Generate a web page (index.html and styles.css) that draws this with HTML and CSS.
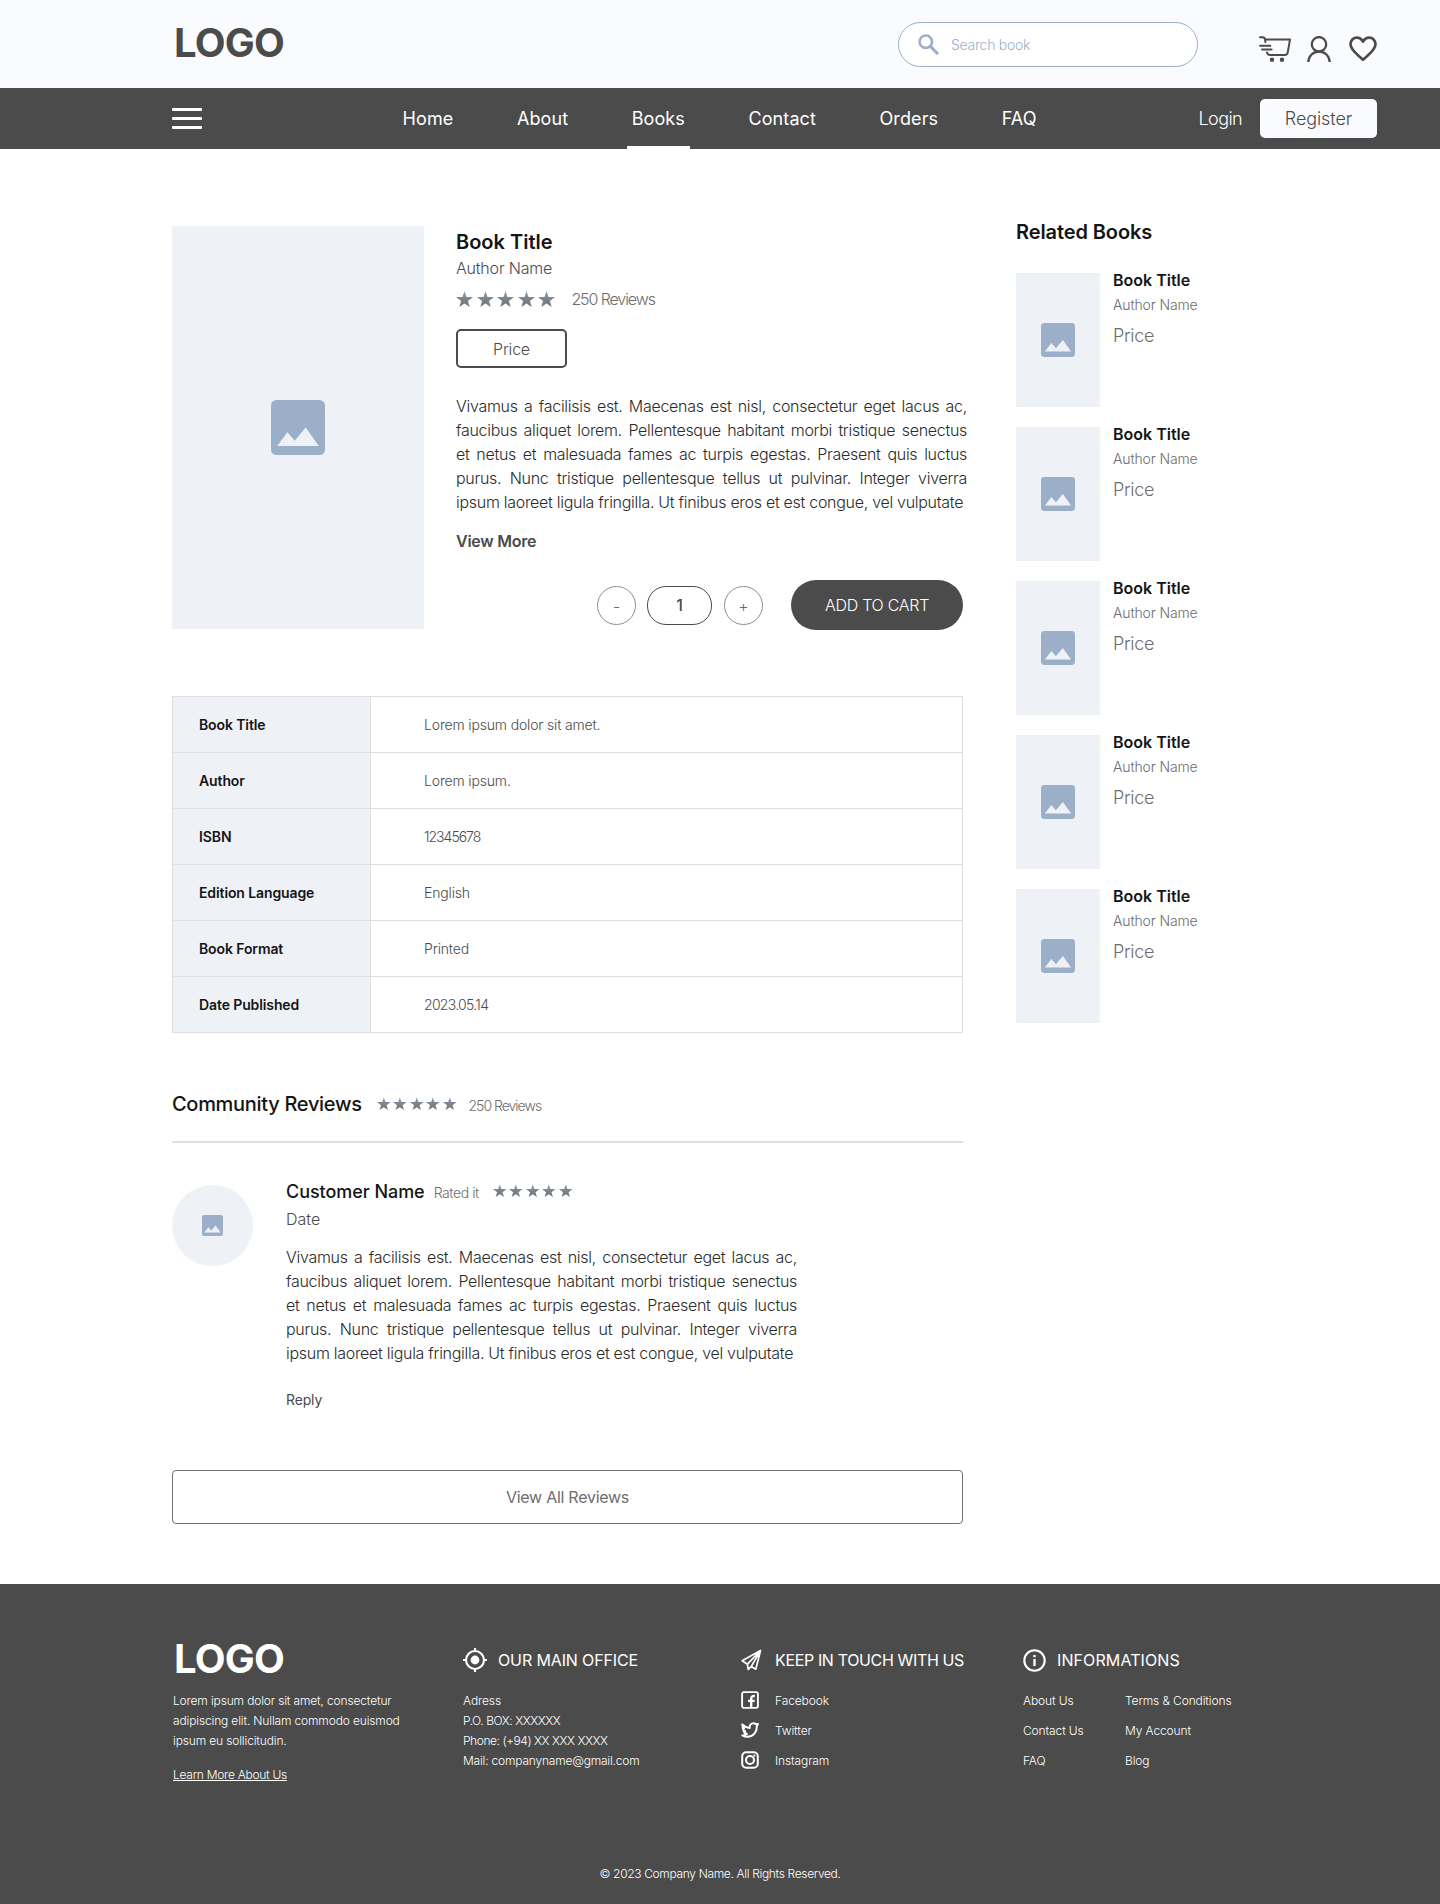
FILE: index.html
```html
<!DOCTYPE html>
<html lang="en">
<head>
<meta charset="utf-8">
<title>Book Title</title>
<link rel="stylesheet" href="styles.css">
</head>
<body>
<svg class="defs" width="0" height="0" aria-hidden="true">
  <defs>
    <linearGradient id="star-fill" x1="0" y1="0" x2="0" y2="1">
      <stop offset="0" stop-color="#91a8c8"/>
      <stop offset="0.5" stop-color="#7b828c"/>
      <stop offset="1" stop-color="#75777a"/>
    </linearGradient>
    <symbol id="star" viewBox="0 0 17 16">
      <path fill="url(#star-fill)" d="M8.5 0l2 5.900 6.500.1-5.100 3.900 1.800 6.100-5.200-3.600L3.300 16l1.800-6.100L0 6l6.500-.1z"/>
    </symbol>
    <symbol id="picture" viewBox="0 0 54 55" preserveAspectRatio="none">
      <rect width="54" height="55" rx="5.5" fill="#9cafc9"/>
      <path fill="#eef2f7" d="M6.2 46l10.2-13.8 7.3 8.6 11-13.2L47.8 46z"/>
    </symbol>
  </defs>
</svg>

<header class="topbar">
  <a class="logo">LOGO</a>
  <label class="search">
    <svg width="21" height="21" viewBox="0 0 21 21" fill="none" stroke="#9cafc9"><circle cx="7.8" cy="7.7" r="6.2" stroke-width="2.6"/><path d="M12.4 12.4l7.6 7.6" stroke-width="3"/></svg>
    <span>Search book</span>
  </label>
  <div class="tools">
    <svg class="cart" width="32" height="27" viewBox="0 0 32 27" fill="none" stroke="#4b4b4b" stroke-width="2" stroke-linecap="round" stroke-linejoin="round"><path d="M1 1.3h2.6c1.6 0 2.3.8 2.5 2.4l.3 2.3M6 3.6h25l-2.3 13.1c-.3 1.6-1.2 2.3-2.7 2.3H11c-1.600 0-2.700-.9-3-2.600M1 9.700h10.300M3 13.400h9.600"/><circle cx="13" cy="23.800" r="1.200" fill="#4b4b4b"/><circle cx="23" cy="23.800" r="1.200" fill="#4b4b4b"/></svg>
    <svg class="user" width="24" height="27" viewBox="0 0 24 27" fill="none" stroke="#4b4b4b" stroke-width="2.300"><circle cx="12" cy="8.300" r="7.200"/><path d="M1.300 26c.3-6 4.800-10.400 10.700-10.400S22.400 20 22.700 26"/></svg>
    <svg class="heart" width="28" height="26" viewBox="0 0 28 26" fill="none" stroke="#4b4b4b" stroke-width="2.700" stroke-linejoin="round"><path d="M14 23.800C9.500 19.200 1.500 14.500 1.500 8.300c0-3.900 2.900-6.700 6.300-6.700 2.600 0 4.800 1.300 6.200 4.100 1.400-2.800 3.600-4.100 6.200-4.100 3.400 0 6.300 2.800 6.300 6.700 0 6.200-8 10.900-12.500 15.500z"/></svg>
  </div>
</header>

<nav class="navbar">
  <div class="burger"><i></i><i></i><i></i></div>
  <ul class="menu">
    <li>Home</li>
    <li>About</li>
    <li class="active">Books</li>
    <li>Contact</li>
    <li>Orders</li>
    <li>FAQ</li>
  </ul>
  <a class="login">Login</a>
  <a class="register">Register</a>
</nav>

<main class="page">
  <div class="content">
    <section class="product">
      <div class="cover"><svg width="54" height="55"><use href="#picture"/></svg></div>
      <div class="info">
        <h1>Book Title</h1>
        <p class="author">Author Name</p>
        <div class="rating">
          <span class="stars"><svg><use href="#star"/></svg><svg><use href="#star"/></svg><svg><use href="#star"/></svg><svg><use href="#star"/></svg><svg><use href="#star"/></svg></span>
          <span class="count">250 Reviews</span>
        </div>
        <div class="price">Price</div>
        <p class="blurb"><span>Vivamus a facilisis est. Maecenas est nisl, consectetur eget lacus ac,</span> <span>faucibus aliquet lorem. Pellentesque habitant morbi tristique senectus</span> <span>et netus et malesuada fames ac turpis egestas. Praesent quis luctus</span> <span>purus. Nunc tristique pellentesque tellus ut pulvinar. Integer viverra</span> <span>ipsum laoreet ligula fringilla. Ut finibus eros et est congue, vel vulputate</span></p>
        <a class="more">View More</a>
        <div class="buy">
          <button class="step">-</button>
          <span class="qty">1</span>
          <button class="step">+</button>
          <button class="add">ADD TO CART</button>
        </div>
      </div>
    </section>

    <dl class="specs">
      <dt>Book Title</dt><dd>Lorem ipsum dolor sit amet.</dd>
      <dt>Author</dt><dd>Lorem ipsum.</dd>
      <dt>ISBN</dt><dd class="isbn">12345678</dd>
      <dt>Edition Language</dt><dd>English</dd>
      <dt>Book Format</dt><dd>Printed</dd>
      <dt>Date Published</dt><dd class="published">2023.05.14</dd>
    </dl>

    <section class="reviews">
      <div class="reviews-head">
        <h2>Community Reviews</h2>
        <span class="stars small"><svg><use href="#star"/></svg><svg><use href="#star"/></svg><svg><use href="#star"/></svg><svg><use href="#star"/></svg><svg><use href="#star"/></svg></span>
        <span class="count">250 Reviews</span>
      </div>
      <article class="review">
        <div class="avatar"><svg width="21" height="21"><use href="#picture"/></svg></div>
        <div class="review-body">
          <div class="review-top">
            <h3>Customer Name</h3>
            <span class="rated">Rated it</span>
            <span class="stars small"><svg><use href="#star"/></svg><svg><use href="#star"/></svg><svg><use href="#star"/></svg><svg><use href="#star"/></svg><svg><use href="#star"/></svg></span>
          </div>
          <p class="date">Date</p>
          <p class="blurb"><span>Vivamus a facilisis est. Maecenas est nisl, consectetur eget lacus ac,</span> <span>faucibus aliquet lorem. Pellentesque habitant morbi tristique senectus</span> <span>et netus et malesuada fames ac turpis egestas. Praesent quis luctus</span> <span>purus. Nunc tristique pellentesque tellus ut pulvinar. Integer viverra</span> <span>ipsum laoreet ligula fringilla. Ut finibus eros et est congue, vel vulputate</span></p>
          <a class="reply">Reply</a>
        </div>
      </article>
      <a class="view-all">View All Reviews</a>
    </section>
  </div>

  <aside class="related">
    <h2>Related Books</h2>
    <div class="book"><div class="thumb"><svg width="34" height="34"><use href="#picture"/></svg></div><div><h3>Book Title</h3><p>Author Name</p><b>Price</b></div></div>
    <div class="book"><div class="thumb"><svg width="34" height="34"><use href="#picture"/></svg></div><div><h3>Book Title</h3><p>Author Name</p><b>Price</b></div></div>
    <div class="book"><div class="thumb"><svg width="34" height="34"><use href="#picture"/></svg></div><div><h3>Book Title</h3><p>Author Name</p><b>Price</b></div></div>
    <div class="book"><div class="thumb"><svg width="34" height="34"><use href="#picture"/></svg></div><div><h3>Book Title</h3><p>Author Name</p><b>Price</b></div></div>
    <div class="book"><div class="thumb"><svg width="34" height="34"><use href="#picture"/></svg></div><div><h3>Book Title</h3><p>Author Name</p><b>Price</b></div></div>
  </aside>
</main>

<footer class="footer">
  <div class="columns">
    <div class="about">
      <a class="logo">LOGO</a>
      <p>Lorem ipsum dolor sit amet, consectetur<br>adipiscing elit. Nullam commodo euismod<br>ipsum eu sollicitudin.</p>
      <a class="learn">Learn More About Us</a>
    </div>
    <div class="col office">
      <h4><svg width="24" height="24" viewBox="0 0 24 24" fill="none" stroke="#fff" stroke-width="2.100"><circle cx="12" cy="12" r="9"/><circle cx="12" cy="12" r="4.400" fill="#fff" stroke="none"/><path d="M12 0v3.500M12 20.500V24M0 12h3.500M20.500 12H24"/></svg>OUR MAIN OFFICE</h4>
      <p>Adress<br><span class="tight">P.O. BOX: XXXXXX</span><br><span class="tight">Phone: (+94) XX XXX XXXX</span><br><span class="mail">Mail: companyname@gmail.com</span></p>
    </div>
    <div class="col touch">
      <h4><svg width="21" height="22" viewBox="0 0 21 22" fill="none" stroke="#fff" stroke-width="1.700" stroke-linejoin="round"><path d="M19.500 1.500L1.200 11.800l5.200 3.400.8 5.200 3-2.800 4.600 2.600zM6.400 15.200L19.500 1.500l-9.300 16.100"/></svg>KEEP IN TOUCH WITH US</h4>
      <ul>
        <li><svg width="18" height="18" viewBox="0 0 18 18" fill="none" stroke="#fff"><rect x="1.100" y="1.100" width="15.800" height="15.800" rx="1.800" stroke-width="1.900"/><path d="M10.200 16.500V7.700c0-1.900 1-2.800 3.700-2.600M7 9.900h6.600" stroke-width="2.400"/></svg>Facebook</li>
        <li><svg width="18" height="18" viewBox="0 0 18 18" fill="none" stroke="#fff" stroke-width="2" stroke-linejoin="round"><path d="M1.300 3.400c2.100 2.300 4.500 3.400 7.400 3.500-.3-2.800 1.300-4.700 3.600-4.700 1.100 0 2 .4 2.700 1.100l2-.4-1.200 2.300c.2 6-3.500 10.500-9.200 10.600-2 0-3.800-.5-5.200-1.400 1.900 0 3.300-.4 4.500-1.400-1.600-.3-2.700-1.200-3.200-2.600h1.500C2.600 9.600 1.700 8.300 1.600 6.900l1.500.3C1.500 6.100 1.200 4.900 1.300 3.400z"/></svg>Twitter</li>
        <li><svg width="18" height="18" viewBox="0 0 18 18" fill="none" stroke="#fff" stroke-width="2"><rect x="1.200" y="1.200" width="15.600" height="15.600" rx="4"/><circle cx="9" cy="9" r="4"/><circle cx="13.400" cy="4.600" r="1.100" fill="#fff" stroke="none"/></svg>Instagram</li>
      </ul>
    </div>
    <div class="col informations">
      <h4><svg width="23" height="23" viewBox="0 0 23 23" fill="none" stroke="#fff" stroke-width="2.100"><circle cx="11.500" cy="11.500" r="10.200"/><path d="M11.500 10v7M11.500 6v2.300" stroke-width="2.300"/></svg>INFORMATIONS</h4>
      <div class="links">
        <span>About Us</span><span>Terms &amp; Conditions</span>
        <span>Contact Us</span><span>My Account</span>
        <span>FAQ</span><span>Blog</span>
      </div>
    </div>
  </div>
  <p class="copyright">© 2023 Company Name. All Rights Reserved.</p>
</footer>
</body>
</html>
```

FILE: styles.css
```css
* { box-sizing: border-box; }
body, h1, h2, h3, h4, p, ul, dl, dd { margin: 0; padding: 0; }
body {
  font-family: Inter, "Liberation Sans", sans-serif;
  font-size: 16px;
  line-height: 24px;
  font-weight: 300;
  color: #4b4b4b;
  background: #fff;
}
ul { list-style: none; }
svg { display: block; flex: none; }
.defs { position: absolute; }
button { font: inherit; color: inherit; padding: 0; background: none; }

.logo {
  display: block;
  padding: 1px 0 0 1px;
  font-size: 40px;
  line-height: 40px;
  font-weight: 700;
  letter-spacing: -0.8px;
}

/* Top bar */
.topbar {
  display: flex;
  align-items: flex-start;
  height: 88px;
  padding: 22px 62px 0 173px;
  background: #fafbfe;
}
.search {
  display: flex;
  align-items: center;
  gap: 12px;
  width: 300px;
  height: 45px;
  margin-left: auto;
  padding-left: 19px;
  border: 1px solid #9cafc9;
  border-radius: 23px;
  background: #fff;
  color: #9cafc9;
  font-size: 14px;
  letter-spacing: -0.25px;
}
.tools { display: flex; margin: 14px 0 0 61px; }
.user { margin-left: 16px; }
.heart { margin-left: 18px; margin-right: 1px; }

/* Navigation */
.navbar {
  display: flex;
  align-items: center;
  height: 61px;
  padding: 0 63px 0 172px;
  background: #4b4b4b;
  color: #fff;
  font-size: 18px;
}
.burger { display: grid; gap: 6px; width: 30px; }
.burger i { height: 3px; border-radius: 1px; background: #fff; }
.menu {
  display: flex;
  align-self: stretch;
  gap: 63.5px;
  margin-left: 200.6px;
  font-weight: 400;
  line-height: 61px;
  letter-spacing: 0.1px;
}
.menu li { height: 61px; }
.menu .active {
  margin: 0 -5px;
  padding: 0 5px;
  border-bottom: 3px solid #fff;
}
.login { margin-left: auto; letter-spacing: -0.6px; padding-top: 1px; }
.register {
  width: 117px;
  height: 39px;
  margin-left: 18px;
  border-radius: 5px;
  background: #fafbfe;
  color: #4b4b4b;
  line-height: 40px;
  text-align: center;
  letter-spacing: -0.1px;
}

/* Page grid */
.page {
  display: flex;
  align-items: flex-start;
  gap: 53px;
  padding: 77px 0 60px 172px;
}
.content { width: 791px; }

/* Product */
.product { display: flex; gap: 32px; height: 404px; }
.cover {
  display: grid;
  place-items: center;
  flex: none;
  width: 252px;
  height: 403px;
  background: #eef2f7;
}
.info { width: 511px; padding-top: 4px; flex: none; }
.info h1 { font-size: 20px; font-weight: 600; color: #151515; }
.author { margin-top: 2px; letter-spacing: -0.2px; }
.rating { display: flex; align-items: center; gap: 16px; margin-top: 7px; }
.count { color: #6d6d6d; letter-spacing: -1.1px; }
.stars { display: flex; gap: 3.6px; }
.stars svg { width: 17px; height: 16px; }
.stars.small { gap: 2.9px; }
.stars.small svg { width: 13.6px; height: 13.3px; }
.price {
  width: 111px;
  height: 39px;
  margin-top: 18px;
  border: 2px solid #4b4b4b;
  border-radius: 5px;
  line-height: 36px;
  text-align: center;
  letter-spacing: -0.2px;
}
.blurb { width: 511px; color: #2b2b2b; letter-spacing: -0.29px; }
.blurb span { display: block; text-align-last: justify; white-space: nowrap; }
.blurb span:last-child { text-align-last: left; }
.info .blurb { margin-top: 26px; }
.more { display: block; margin-top: 15px; font-weight: 600; letter-spacing: -0.25px; }
.buy {
  display: flex;
  align-items: center;
  justify-content: flex-end;
  width: 507px;
  margin-top: 27px;
}
.step, .qty { height: 39px; margin-top: 1px; }
.step {
  width: 39px;
  border: 1px solid #8f8f8f;
  border-radius: 50%;
  color: #6d6d6d;
}
.qty {
  width: 65px;
  margin-left: 11px;
  margin-right: 12px;
  border: 1px solid #4b4b4b;
  border-radius: 19px;
  line-height: 37px;
  text-align: center;
  font-weight: 500;
}
.add {
  width: 172px;
  height: 50px;
  margin-left: 28px;
  border: 0;
  border-radius: 25px;
  background: #4b4b4b;
  color: #fff;
  letter-spacing: -0.27px;
}

/* Specification table */
.specs {
  display: grid;
  grid-template-columns: 198px 1fr;
  margin-top: 66px;
  border: 1px solid #dfdfdf;
  border-bottom: 0;
  font-size: 14px;
  line-height: 55px;
}
.specs dt, .specs dd { height: 56px; border-bottom: 1px solid #dfdfdf; }
.specs dt {
  padding-left: 26px;
  border-right: 1px solid #dfdfdf;
  background: #eef2f7;
  color: #151515;
  font-weight: 600;
  letter-spacing: -0.11px;
}
.specs dd { padding-left: 53px; letter-spacing: -0.16px; }
.specs .isbn { letter-spacing: -1px; }
.specs .published { letter-spacing: -0.7px; }

/* Reviews */
.reviews { margin-top: 59px; }
.reviews-head {
  display: flex;
  height: 51px;
  border-bottom: 2px solid #dfe1e1;
}
.reviews-head h2 {
  width: 205px;
  font-size: 20px;
  font-weight: 500;
  color: #151515;
  letter-spacing: -0.3px;
}
.reviews-head .stars { margin-top: 5px; }
.reviews-head .count { margin-left: 12px; padding-top: 2px; font-size: 14px; letter-spacing: -1px; }
.review { display: flex; gap: 33px; margin-top: 37px; }
.avatar {
  display: grid;
  place-items: center;
  width: 81px;
  height: 81px;
  margin-top: 5px;
  border-radius: 50%;
  background: #eef2f7;
}
.review-top { display: flex; height: 24px; }
.review-top h3 { font-size: 18px; font-weight: 500; color: #151515; letter-spacing: -0.05px; }
.rated { margin-left: 9px; padding-top: 1px; font-size: 14px; color: #6d6d6d; letter-spacing: -0.4px; }
.review-top .stars { margin: 4px 0 0 14px; }
.date { margin-top: 3px; }
.review .blurb { margin-top: 14px; }
.reply { display: block; margin-top: 25px; font-size: 14px; line-height: 20px; font-weight: 400; letter-spacing: -0.15px; }
.view-all {
  display: block;
  height: 54px;
  margin-top: 60px;
  border: 1px solid #707070;
  border-radius: 4px;
  color: #6d6d6d;
  line-height: 53px;
  text-align: center;
  font-weight: 400;
  letter-spacing: -0.27px;
}

/* Related books */
.related h2 { margin: -6px 0 29px; font-size: 20px; font-weight: 600; color: #151515; letter-spacing: -0.1px; }
.book { display: flex; gap: 13px; height: 134px; margin-bottom: 20px; }
.thumb { display: grid; place-items: center; width: 84px; background: #eef2f7; }
.book h3 { margin-top: -5px; font-size: 16px; font-weight: 600; color: #151515; }
.book p { margin-top: 1px; font-size: 14px; color: #6d6d6d; letter-spacing: -0.13px; }
.book b { display: block; margin-top: 7px; font-size: 18px; font-weight: 300; color: #6d6d6d; letter-spacing: -0.3px; }

/* Footer */
.footer {
  height: 320px;
  padding-top: 54px;
  background: #4b4b4b;
  color: #fff;
  font-size: 12px;
  line-height: 20px;
}
.columns {
  display: grid;
  grid-template-columns: 290px 278px 282px auto;
  height: 226px;
  padding-left: 173px;
  letter-spacing: -0.12px;
}
.about p { margin: 12px 0 14px; letter-spacing: -0.15px; }
.learn { text-decoration: underline; letter-spacing: -0.27px; }
.col { padding-top: 10px; }
.col h4 {
  display: flex;
  align-items: center;
  height: 24px;
  margin-bottom: 19px;
  font-size: 16px;
  font-weight: 400;
}
.office h4 { gap: 11px; letter-spacing: -0.13px; }
.touch h4 { gap: 13px; letter-spacing: -0.36px; }
.informations h4 { gap: 11px; letter-spacing: 0.1px; }
.tight { letter-spacing: -0.44px; }
.mail { letter-spacing: -0.2px; }
.touch li { display: flex; gap: 16px; height: 20px; margin-bottom: 10px; }
.links { display: grid; grid-template-columns: 102px auto; row-gap: 10px; }
.copyright { text-align: center; letter-spacing: -0.34px; }
```
